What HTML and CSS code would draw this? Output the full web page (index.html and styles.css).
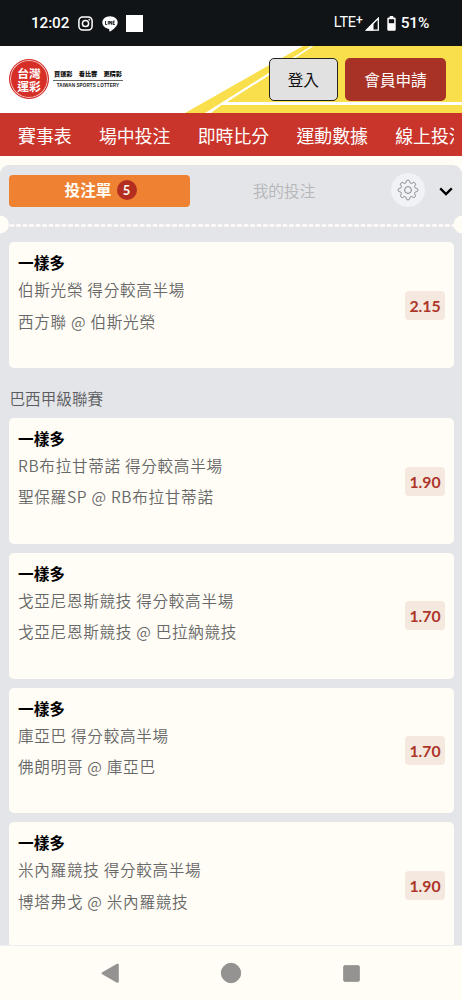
FILE: index.html
```html
<!DOCTYPE html>
<html lang="zh-Hant">
<head>
<meta charset="utf-8">
<meta name="viewport" content="width=device-width, initial-scale=1">
<title>台灣運彩</title>
<link rel="stylesheet" href="styles.css">
</head>
<body>
<div class="screen">
  <div class="status">
    <div class="status-group">
      <span class="clock">12:02</span>
      <svg class="ic-insta" width="15" height="15" viewBox="0 0 15 15" fill="none" stroke="#fff" stroke-width="1.5"><rect x=".9" y=".9" width="13.2" height="13.2" rx="3.8"/><circle cx="7.5" cy="7.5" r="3.1"/><circle cx="11.3" cy="3.7" r=".6" fill="#fff" stroke-width=".6"/></svg>
      <svg class="ic-line" width="16" height="16" viewBox="0 0 16 16"><path d="M8 .3C3.700 .3.300 3.100.300 6.600c0 3.200 2.700 5.700 6.500 6.300.700.100.600 1.400.5 2.300 0 .4.300.5.700.3 2.100-1 7.700-4.800 7.700-8.900C15.700 3.100 12.300.3 8 .3z" fill="#fff"/><path d="M3.500 5v3.500h1.600M6.300 5v3.500M7.700 8.500V5l2 3.500V5M12.800 5.100h-1.700v3.400h1.700M11.100 6.800h1.500" fill="none" stroke="#101417" stroke-width=".9"/></svg>
      <span class="block"></span>
    </div>
    <div class="status-group">
      <span class="lte">LTE<sup>+</sup></span>
      <svg class="ic-signal" width="14" height="14" viewBox="0 0 14 14"><path d="M13.300 1.200V13.100H1.400z" fill="none" stroke="#fff" stroke-width="1.300"/><path d="M8.500 5.500V13.500H1z" fill="#fff"/></svg>
      <svg class="ic-batt" width="9" height="15" viewBox="0 0 9 15"><path d="M2.700 0h3.600v1.600H7.500q1.200 0 1.200 1.200v10.800q0 1.200-1.200 1.200h-6Q.3 14.800.3 13.600V2.800Q.3 1.600 1.500 1.600h1.200z" fill="#fff"/><path d="M1.800 3.200h5.400v4H1.800z" fill="#101417"/></svg>
      <span class="pct">51%</span>
    </div>
  </div>

  <header class="header">
    <svg class="header-art" width="462" height="67" viewBox="0 0 462 67"><path d="M185 67L303 0H462V67z" fill="#f8df4b"/><path d="M205 67L268 27.500L311 0H313.500L268 30L227 56H462V59H221.500L211 67z" fill="#fff"/></svg>
    <div class="brand">
      <div class="seal"><span>台灣</span><span>運彩</span></div>
      <div class="brand-text">
        <div class="slogan"><span>買運彩</span><span>看比賽</span><span>更精彩</span></div>
        <div class="brand-en">TAIWAN SPORTS LOTTERY</div>
      </div>
    </div>
    <div class="actions">
      <button class="btn login">登入</button>
      <button class="btn join">會員申請</button>
    </div>
  </header>

  <nav class="nav"><div class="nav-track"><a>賽事表</a><a>場中投注</a><a>即時比分</a><a>運動數據</a><a>線上投注</a></div></nav>

  <main class="panel">
    <div class="tabs">
      <div class="tab active">投注單<span class="count">5</span></div>
      <div class="tab">我的投注</div>
      <div class="gear"><svg width="22" height="22" viewBox="-11 -11 22 22" fill="none" stroke="#74777b" stroke-width=".9" stroke-linejoin="round"><circle r="3.400"/><path id="cog" d=""/></svg></div>
      <svg class="chev" width="14" height="9" viewBox="0 0 14 9" fill="none" stroke="#000" stroke-width="2.300"><path d="M1.200 1.400L7 7.100l5.800-5.700"/></svg>
    </div>
    <div class="tear"><svg width="462" height="19" viewBox="0 0 462 19"><path d="M9.700 10.500H454" stroke="#fffdf6" stroke-width="2.600" stroke-dasharray="4.600 1.900"/><circle cx="0" cy="9.500" r="9" fill="#fffdf6"/><circle cx="462.500" cy="9.500" r="9" fill="#fffdf6"/></svg></div>

    <article class="card"><div><h3>一樣多</h3><p>伯斯光榮 得分較高半場</p><p>西方聯 @ 伯斯光榮</p></div><span class="odds">2.15</span></article>
    <h2 class="league">巴西甲級聯賽</h2>
    <div class="list">
      <article class="card"><div><h3>一樣多</h3><p>RB布拉甘蒂諾 得分較高半場</p><p>聖保羅SP @ RB布拉甘蒂諾</p></div><span class="odds">1.90</span></article>
      <article class="card"><div><h3>一樣多</h3><p>戈亞尼恩斯競技 得分較高半場</p><p>戈亞尼恩斯競技 @ 巴拉納競技</p></div><span class="odds">1.70</span></article>
      <article class="card"><div><h3>一樣多</h3><p>庫亞巴 得分較高半場</p><p>佛朗明哥 @ 庫亞巴</p></div><span class="odds">1.70</span></article>
      <article class="card"><div><h3>一樣多</h3><p>米內羅競技 得分較高半場</p><p>博塔弗戈 @ 米內羅競技</p></div><span class="odds">1.90</span></article>
    </div>
  </main>

  <footer class="sysnav">
    <svg width="462" height="54" viewBox="0 0 462 54" fill="#949391" stroke="#949391" stroke-linejoin="round"><path d="M102.800 27.200L117.600 18.800v16.800z" stroke-width="2.400"/><circle cx="231" cy="27" r="9.700"/><rect x="343.700" y="19.700" width="15.600" height="15.600" rx="1"/></svg>
  </footer>
</div>
<script src="cog.js"></script>
</body>
</html>
```
FILE: cog.js
```js
// Eight-toothed gear outline with softly rounded teeth.
const points = [];
for (let i = 0; i <= 160; i++) {
  const a = (i / 160) * Math.PI * 2;
  const wave = Math.tanh(2.2 * Math.cos(8 * a)) / Math.tanh(2.2);
  const r = 8.6 + 1.2 * wave;
  points.push((r * Math.cos(a)).toFixed(2) + " " + (r * Math.sin(a)).toFixed(2));
}
document.getElementById("cog").setAttribute("d", "M" + points.join("L") + "Z");
```
FILE: styles.css
```css
* { box-sizing: border-box; }
body { margin: 0; background: #fffdf6; font-family: Lato, "Noto Sans CJK TC", sans-serif; }
h2, h3, p { margin: 0; }
.screen { width: 462px; height: 1000px; overflow: hidden; display: flex; flex-direction: column; }

.status { flex: none; height: 46px; background: #101417; color: #fff; display: flex; justify-content: space-between; padding: 0 33px 0 31px; }
.status-group { display: flex; align-items: center; }
.clock { width: 46.500px; font: 500 15.300px/46px Roboto, sans-serif; letter-spacing: -.1px; white-space: nowrap; }
.ic-insta { margin-top: 1px; }
.ic-line { margin: 1px 8px 0 9.500px; }
.block { width: 17px; height: 17px; background: #fff; }
.lte { font: 400 14.500px/46px Roboto, sans-serif; letter-spacing: -.2px; }
.lte sup { font-size: 12px; font-weight: 500; line-height: 0; vertical-align: 3px; }
.ic-signal { margin: 1px 8px 0 3px; }
.ic-batt { margin-right: 4.500px; }
.pct { font: 500 15.500px/46px Roboto, sans-serif; letter-spacing: -.3px; }

.header { position: relative; flex: none; height: 66.500px; background: #fff; display: flex; justify-content: space-between; padding: 11.500px 16px 0 9px; overflow: hidden; }
.header-art { position: absolute; left: 0; top: 0; }
.brand, .actions { position: relative; display: flex; }
.brand { height: 43px; align-items: center; gap: 4px; }
.seal { width: 40px; height: 40px; border-radius: 50%; border: 1px solid #d62f28; background: #d62f28; box-shadow: inset 0 0 0 1px #f5cbc7; color: #fff; display: flex; flex-direction: column; align-items: center; justify-content: center; font: 700 11.800px/13px "Noto Sans CJK TC", sans-serif; }
.seal span { height: 13px; }
.brand-text { width: 70px; display: flex; flex-direction: column; }
.slogan { display: flex; justify-content: space-between; padding: 0 1px 2px; border-bottom: 1px solid #666; font: 900 6.200px/9px "Noto Sans CJK TC", sans-serif; color: #111; }
.brand-en { padding-top: 1px; font: 700 4.600px/7px "Liberation Sans", sans-serif; color: #222; text-align: center; white-space: nowrap; letter-spacing: .1px; }
.actions { gap: 7px; }
.btn { height: 43px; padding: 1px 0 0; border-radius: 5px; font: 400 15.600px/1 "Noto Sans CJK TC", sans-serif; }
.login { width: 69.500px; background: #e1e1e1; border: 1px solid #24251f; color: #111; }
.join { width: 101px; background: #a83226; border: 0; color: #fff; }

.nav { flex: none; height: 43.500px; background: #ca352b; padding: 0 8px 0 18px; }
.nav-track { display: flex; gap: 27.200px; overflow: hidden; color: #fff; font: 400 17.900px/44px "Noto Sans CJK TC", sans-serif; white-space: nowrap; }
.nav-track a { flex: none; }

.panel { flex: 1; min-height: 0; overflow: hidden; margin-top: 9px; background: #e4e5e8; border-radius: 9px 9px 0 0; }
.tabs { display: flex; align-items: center; height: 50px; padding: 1px 9px 0; font: 400 15.700px/1 "Noto Sans CJK TC", sans-serif; color: #b5b6b9; }
.tab { flex: none; width: 181px; height: 32px; display: flex; align-items: center; justify-content: center; }
.tab + .tab { width: 188px; font-weight: 350; }
.tab.active { background: #ee8132; border-radius: 4px; color: #fffdf6; font-weight: 700; padding: 0 0 1px 2px; }
.count { width: 20px; height: 20px; margin-left: 5px; border-radius: 50%; background: #b32d20; font: 700 13px/20px Lato, sans-serif; text-align: center; }
.gear { flex: none; width: 34px; height: 34px; margin: -1px 0 0 12.500px; border-radius: 50%; background: #f1f2f5; display: flex; align-items: center; justify-content: center; }
.chev { flex: none; margin: 2px 0 0 14px; }
.tear { height: 27.300px; }
.tear svg { display: block; }

.card { height: 125.800px; margin: 0 8px 0 9px; padding: 5px 9px 0; background: #fffdf6; border-radius: 5px; display: flex; justify-content: space-between; }
.card h3 { font: 700 15.700px/31px "Noto Sans CJK TC", sans-serif; color: #000; }
.card p { font: 350 15.600px/31.200px "Noto Sans CJK TC", sans-serif; letter-spacing: .7px; color: #686868; white-space: nowrap; }
.card p:first-of-type { margin-top: -4px; }
.odds { align-self: flex-start; margin-top: 43.600px; width: 40px; height: 29px; border-radius: 4px; background: #f5e8df; color: #ad3529; font: 700 15.800px/29px Lato, sans-serif; text-align: center; }
.league { height: 50px; padding: 0 9.500px; font: 350 15.600px/60px "Noto Sans CJK TC", sans-serif; color: #5b5d61; }
.list { display: flex; flex-direction: column; gap: 9px; }
.list .card { flex: none; }

.sysnav { flex: none; height: 54px; background: #fffdf6; position: relative; box-shadow: 0 -1px 0 #edeeef; }
.sysnav svg { display: block; }
```
